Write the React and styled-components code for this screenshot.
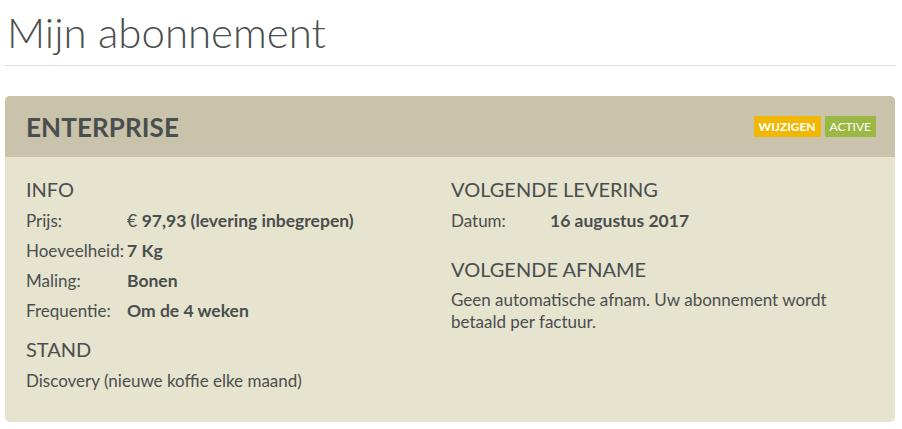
import React from 'react';
import styled, { createGlobalStyle } from 'styled-components';

const GlobalStyle = createGlobalStyle`
	body {
		margin: 0;
		background: #ffffff;
		font-family: Lato, 'Noto Sans', sans-serif;
		color: #4a4e4e;
	}
`;

const Page = styled.div`
	padding: 0 7px 0 5px;
`;

const Title = styled.h1`
	margin: 0;
	padding: 6px 0 0 2px;
	font-size: 42px;
	font-weight: 300;
	line-height: 52px;
	color: #4a4e4e;
`;

const Rule = styled.hr`
	margin: 7px 0 30px;
	border: none;
	border-top: 1px solid #dcdcdc;
`;

const Card = styled.section`
	border-radius: 5px;
	overflow: hidden;
	background: #e6e3cf;
`;

const CardHeader = styled.header`
	height: 61px;
	padding: 0 19px 0 21px;
	display: flex;
	align-items: center;
	justify-content: space-between;
	background: #c8c3aa;
`;

const PlanName = styled.h2`
	margin: 0;
	font-size: 26px;
	font-weight: 700;
	letter-spacing: 0.1px;
`;

const Badges = styled.div`
	display: flex;
	gap: 4px;
`;

const Badge = styled.span`
	padding: 3px 5px 2px;
	font-size: 12px;
	line-height: 16px;
	font-weight: ${(p) => (p.bold ? 700 : 400)};
	color: #ffffff;
	background: ${(p) => p.color};
	text-transform: uppercase;
`;

const CardBody = styled.div`
	padding: 20px 21px 26px;
	display: grid;
	grid-template-columns: 425px 1fr;
`;

const Column = styled.div`
	display: flex;
	flex-direction: column;
`;

const SectionTitle = styled.h3`
	margin: ${(p) => p.gap || 0}px 0 5px;
	font-size: 20px;
	font-weight: 400;
	line-height: 24px;
	text-transform: uppercase;
`;

const Row = styled.div`
	display: flex;
	font-size: 17px;
	line-height: 30px;
`;

const Label = styled.span`
	flex: 0 0 auto;
	min-width: ${(p) => p.width || 101}px;
	white-space: nowrap;
`;

const Value = styled.span`
	font-weight: 700;
	font-size: 17.5px;
	white-space: nowrap;
`;

const Plain = styled.span`
	font-weight: 400;
`;

const Text = styled.p`
	margin: ${(p) => p.gap || 0}px 0 0;
	font-size: 17px;
	line-height: ${(p) => p.lh || 30}px;
	max-width: 410px;
`;

export default function App() {
	return (
		<Page>
			<GlobalStyle />
			<Title>Mijn abonnement</Title>
			<Rule />
			<Card>
				<CardHeader>
					<PlanName>ENTERPRISE</PlanName>
					<Badges>
						<Badge bold color='#f2b705'>Wijzigen</Badge>
						<Badge color='#9bb843'>Active</Badge>
					</Badges>
				</CardHeader>
				<CardBody>
					<Column>
						<SectionTitle>Info</SectionTitle>
						<Row>
							<Label>Prijs:</Label>
							<Value><Plain>€ </Plain>97,93 (levering inbegrepen)</Value>
						</Row>
						<Row>
							<Label>Hoeveelheid:</Label>
							<Value>7 Kg</Value>
						</Row>
						<Row>
							<Label>Maling:</Label>
							<Value>Bonen</Value>
						</Row>
						<Row>
							<Label>Frequentie:</Label>
							<Value>Om de 4 weken</Value>
						</Row>
						<SectionTitle gap={11}>Stand</SectionTitle>
						<Text>Discovery (nieuwe koffie elke maand)</Text>
					</Column>
					<Column>
						<SectionTitle>Volgende levering</SectionTitle>
						<Row>
							<Label width={99}>Datum:</Label>
							<Value>16 augustus 2017</Value>
						</Row>
						<SectionTitle gap={21}>Volgende afname</SectionTitle>
						<Text lh={22} gap={3}>Geen automatische afnam. Uw abonnement wordt betaald per factuur.</Text>
					</Column>
				</CardBody>
			</Card>
		</Page>
	);
}
